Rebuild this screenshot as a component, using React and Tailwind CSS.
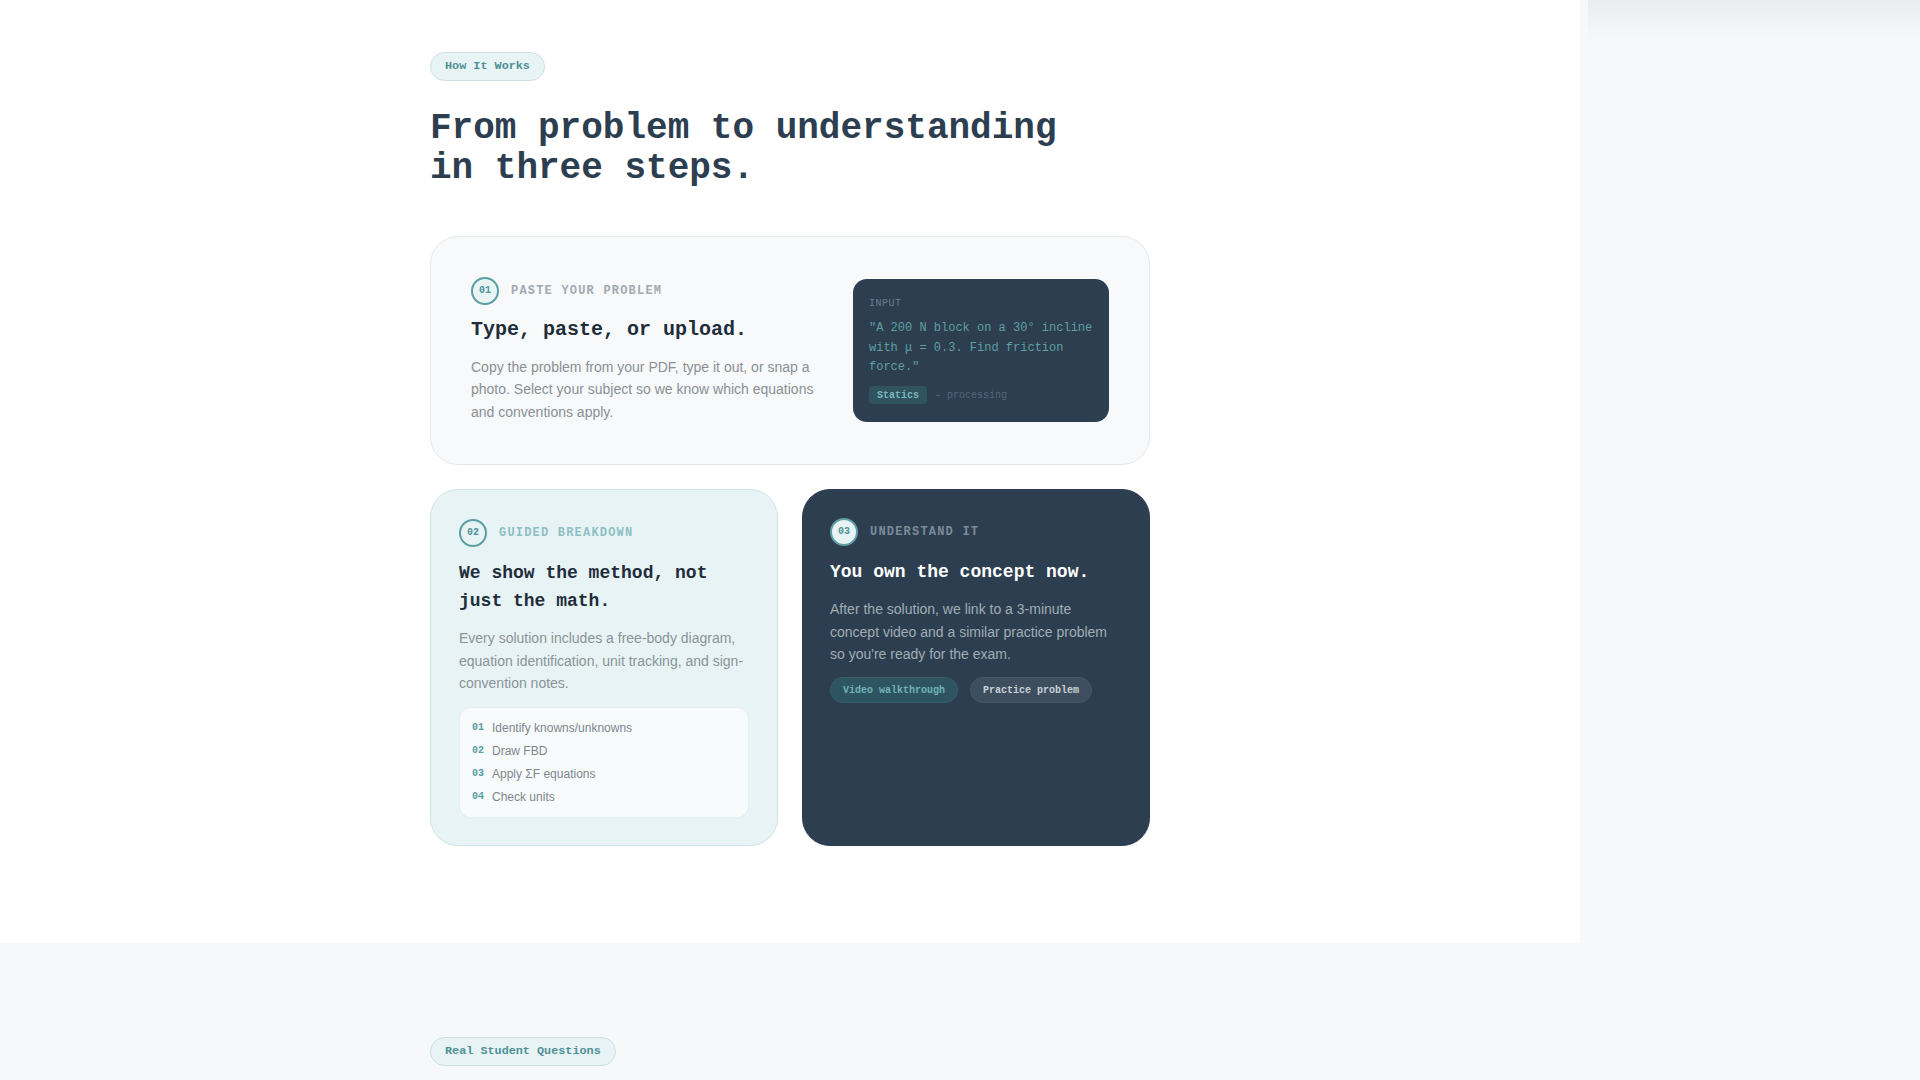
import React from "react";

const mono = "font-['Liberation_Mono','DejaVu_Sans_Mono',monospace]";
const sans = "font-['Liberation_Sans',Arial,sans-serif]";

function Circle({ n, variant }) {
  const cls =
    variant === "dark"
      ? "bg-[#e6f2f3] border-[#5b9fa4] text-[#4d9398]"
      : variant === "teal"
      ? "bg-[#e8f3f5] border-[#5b9fa4] text-[#4d9398]"
      : "bg-[#e9f4f5] border-[#5b9fa4] text-[#4d9398]";
  return (
    <div
      className={`w-7 h-7 rounded-full border-2 flex items-center justify-center text-[10px] font-bold leading-none ${mono} ${cls}`}
    >
      {n}
    </div>
  );
}

function Badge({ children }) {
  return (
    <div
      className={`inline-flex items-center h-[29px] px-[14px] rounded-full border border-[#cde1e4] bg-[#e8f3f5] text-[#4f9096] text-[11.8px] font-bold ${mono}`}
    >
      {children}
    </div>
  );
}

export default function App() {
  return (
    <div className="w-[1920px] bg-[#f6f8f9]">
      <div className="flex">
        <section className="w-[1580px] bg-white pt-[51px] pb-[97px]">
          <div className="w-[720px] mx-auto">
            <Badge>How It Works</Badge>
            <h2
              className={`mt-[28px] text-[36px] leading-[1.1] font-bold text-[#2c3e50] ${mono}`}
            >
              From problem to understanding
              <br />
              in three steps.
            </h2>

            {/* Card 1 */}
            <div className="mt-[47px] rounded-[28px] border border-[#e3e8eb] bg-[#f7f9fa] p-10 flex gap-8 items-start">
              <div className="flex-1">
                <div className="flex items-center gap-3">
                  <Circle n="01" />
                  <span
                    className={`text-[12px] font-bold tracking-[0.1em] text-[#a3a9b0] ${mono}`}
                  >
                    PASTE YOUR PROBLEM
                  </span>
                </div>
                <h3
                  className={`mt-[11px] text-[20px] leading-[28px] font-bold text-[#1f2d3b] ${mono}`}
                >
                  Type, paste, or upload.
                </h3>
                <p
                  className={`mt-3 text-[14px] leading-[1.625] text-[#8a9096] ${sans}`}
                >
                  Copy the problem from your PDF, type it out, or snap a photo.
                  Select your subject so we know which equations and conventions
                  apply.
                </p>
              </div>
              <div className="mt-[2px] w-64 shrink-0 rounded-[14px] bg-[#2c3e50] px-4 pt-[17px] pb-[18px]">
                <div
                  className={`text-[10px] leading-[15px] tracking-[0.05em] text-[#6d7d8c] ${mono}`}
                >
                  INPUT
                </div>
                <p
                  className={`mt-[8.5px] text-[12px] leading-[19.6px] text-[#5f9fa3] ${mono}`}
                >
                  "A 200 N block on a 30° incline with μ = 0.3. Find friction
                  force."
                </p>
                <div className="mt-[8.5px] flex items-center gap-2">
                  <span
                    className={`px-2 h-[18px] flex items-center rounded-[3px] bg-[#2f5460] text-[10px] font-bold text-[#7ab8bc] ${mono}`}
                  >
                    Statics
                  </span>
                  <span className={`text-[10px] text-[#56677a] ${mono}`}>
                    – processing
                  </span>
                </div>
              </div>
            </div>

            {/* Row */}
            <div className="mt-6 grid grid-cols-2 gap-6">
              <div className="rounded-[28px] border border-[#cfe3e6] bg-[#e8f3f5] pt-[29px] px-7 pb-[27px]">
                <div className="flex items-center gap-3">
                  <Circle n="02" variant="teal" />
                  <span
                    className={`text-[12px] font-bold tracking-[0.1em] text-[#8ebfc3] ${mono}`}
                  >
                    GUIDED BREAKDOWN
                  </span>
                </div>
                <h3
                  className={`mt-3 text-[18px] leading-[28px] font-bold text-[#1f2d3b] ${mono}`}
                >
                  We show the method, not just the math.
                </h3>
                <p
                  className={`mt-3 text-[14px] leading-[1.625] text-[#8a9398] ${sans}`}
                >
                  Every solution includes a free-body diagram, equation
                  identification, unit tracking, and sign-convention notes.
                </p>
                <div className="mt-3 rounded-[12px] border border-[#e4eff1] bg-[#f7fbfc] px-3 py-[11px] flex flex-col gap-[5px]">
                  {[
                    ["01", "Identify knowns/unknowns"],
                    ["02", "Draw FBD"],
                    ["03", "Apply ΣF equations"],
                    ["04", "Check units"],
                  ].map(([n, t]) => (
                    <div key={n} className="flex items-center gap-2 leading-[18px]">
                      <span
                        className={`text-[10px] font-bold text-[#5a9ca1] ${mono}`}
                      >
                        {n}
                      </span>
                      <span className={`text-[12px] text-[#7e868d] ${sans}`}>
                        {t}
                      </span>
                    </div>
                  ))}
                </div>
              </div>

              <div className="rounded-[28px] bg-[#2c3e50] pt-[28px] pl-[27px] pr-7 pb-7 border border-[#2c3e50]">
                <div className="flex items-center gap-3">
                  <Circle n="03" variant="dark" />
                  <span
                    className={`text-[12px] font-bold tracking-[0.1em] text-[#7d8b99] ${mono}`}
                  >
                    UNDERSTAND IT
                  </span>
                </div>
                <h3
                  className={`mt-3 text-[18px] leading-[28px] font-bold text-white ${mono}`}
                >
                  You own the concept now.
                </h3>
                <p
                  className={`mt-3 text-[14px] leading-[1.625] text-[#a2acb6] ${sans}`}
                >
                  After the solution, we link to a 3-minute concept video and a
                  similar practice problem so you're ready for the exam.
                </p>
                <div className="mt-[11px] flex gap-3">
                  <span
                    className={`h-[26px] px-[12px] flex items-center rounded-full bg-[#2f5461] border border-[#355e6a] text-[10px] font-bold text-[#6fb3b7] ${mono}`}
                  >
                    Video walkthrough
                  </span>
                  <span
                    className={`h-[26px] px-[12px] flex items-center rounded-full bg-[#3e4e5e] border border-[#46576a] text-[10px] font-bold text-[#c9d1d8] ${mono}`}
                  >
                    Practice problem
                  </span>
                </div>
              </div>
            </div>
          </div>
        </section>
        <div className="relative flex-1 bg-[#f6f8f9]">
          <div className="absolute top-0 left-[8px] right-0 h-10 bg-gradient-to-b from-[#e9edf0] to-transparent" />
        </div>
      </div>
      <section className="bg-[#f6f8f9] pt-[93px] pb-24">
        <div className="w-[720px] ml-[430px]">
          <Badge>Real Student Questions</Badge>
        </div>
      </section>
    </div>
  );
}
